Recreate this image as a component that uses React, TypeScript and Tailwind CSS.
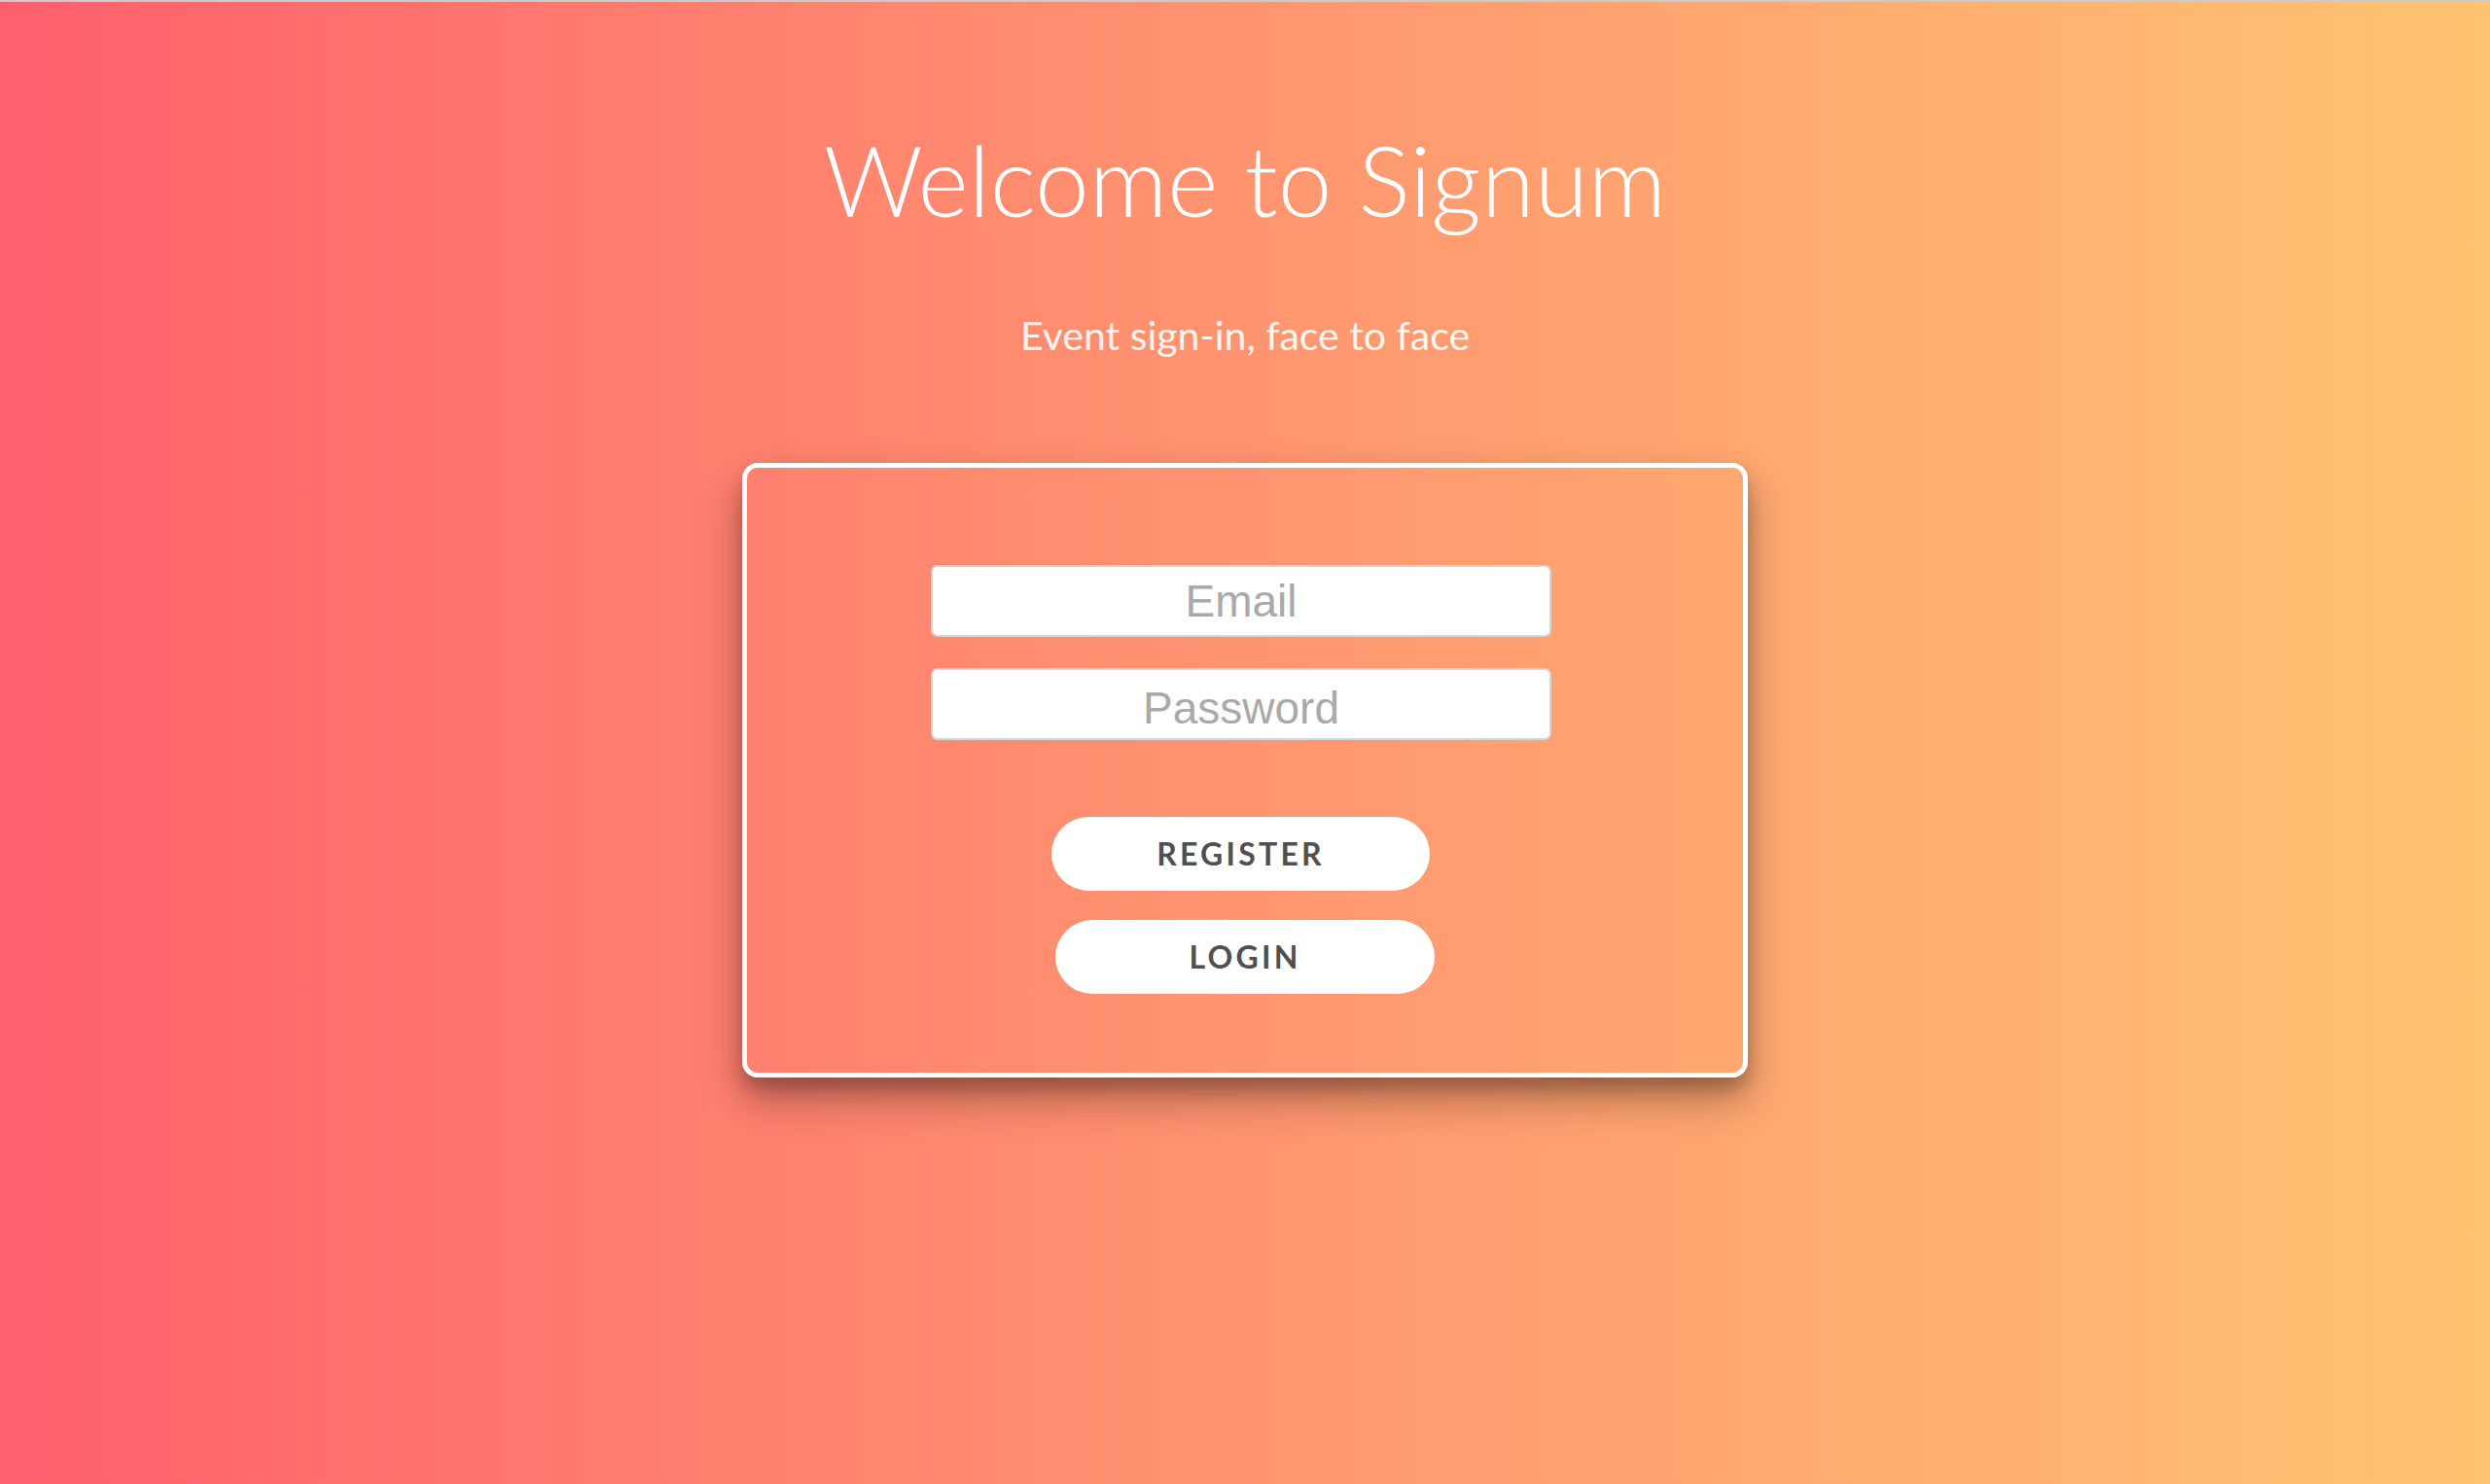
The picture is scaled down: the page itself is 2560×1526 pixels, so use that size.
import React from "react"

function App() {
  return (
    <div className="min-h-screen w-full border-t-2 border-[#cbcbcb] bg-gradient-to-r from-[#ff5f6d] to-[#ffc371] flex flex-col items-center font-['Lato','Noto_Sans',sans-serif]">
      <h1 className="mt-[122px] text-[100px] leading-[1.2] font-light text-white">
        Welcome to Signum
      </h1>
      <p className="mt-[76px] text-[41px] leading-[1.2] text-white/90">
        Event sign-in, face to face
      </p>

      <div className="mt-[107px] w-[1034px] border-[5px] border-white rounded-[16px] pt-[100px] pb-[81px] flex flex-col items-center shadow-[0_22px_45px_rgba(0,0,0,0.32),0_12px_16px_rgba(0,0,0,0.18)]">
        <input
          type="email"
          placeholder="Email"
          className="mr-[8px] w-[638px] h-[74px] bg-white border-2 border-[#d6d6d6] rounded-[7px] text-center text-[46px] font-['Liberation_Sans',Arial,sans-serif] text-[#333] placeholder:text-[#a9a9a9] outline-none"
        />
        <input
          type="password"
          placeholder="Password"
          className="mt-[32px] mr-[8px] w-[638px] h-[74px] pt-[8px] bg-white border-2 border-[#d6d6d6] rounded-[7px] text-center text-[46px] font-['Liberation_Sans',Arial,sans-serif] text-[#333] placeholder:text-[#a9a9a9] outline-none"
        />

        <button className="mt-[79px] mr-[9px] w-[389px] h-[76px] rounded-full bg-white text-[32px] font-bold tracking-[0.1em] text-[#505050]">
          REGISTER
        </button>
        <button className="mt-[30px] w-[390px] h-[76px] rounded-full bg-white text-[32px] font-bold tracking-[0.1em] text-[#505050]">
          LOGIN
        </button>
      </div>
    </div>
  )
}

export default App
